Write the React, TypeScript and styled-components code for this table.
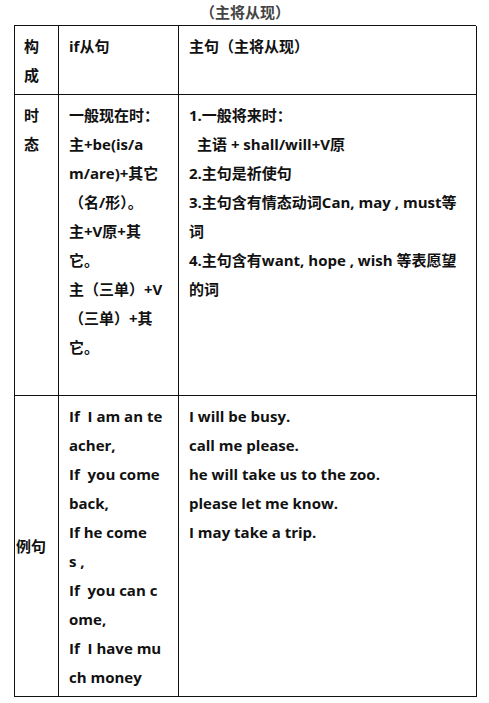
import styled, { createGlobalStyle } from 'styled-components'

const GlobalStyle = createGlobalStyle`
  html, body {
    margin: 0;
    padding: 0;
    background: #ffffff;
  }
  body {
    font-family: "Open Sans", "Noto Sans CJK SC", sans-serif;
    font-weight: 700;
    color: #111;
  }
`

const Page = styled.div`
  width: 489px;
  height: 703px;
  padding: 0 13px 0 14px;
  box-sizing: border-box;
`

const Title = styled.div`
  height: 25px;
  line-height: 25px;
  text-align: center;
  font-size: 15px;
  color: #444;
`

const Table = styled.div`
  display: grid;
  grid-template-columns: 44px 120px 298px;
  grid-template-rows: 69px 301px 301px;
  border-top: 1.5px solid #111;
  border-left: 1.5px solid #111;
`

const Cell = styled.div<{ $center?: boolean; $pad?: number }>`
  border-right: 1.5px solid #111;
  border-bottom: 1.5px solid #111;
  padding: ${(p) => (p.$center ? '0' : '6px')} 4px 0 ${(p) => p.$pad ?? 10}px;
  display: flex;
  flex-direction: column;
  justify-content: ${(p) => (p.$center ? 'center' : 'flex-start')};
  font-size: 15px;
  line-height: 29px;
  white-space: pre;
  overflow: hidden;
`

const Line = styled.div<{ $indent?: number }>`
  padding-left: ${(p) => p.$indent ?? 0}px;
`

const rows: { head: string[]; headCenter?: boolean; ifPart: string[]; main: { text: string; indent?: number }[] }[] = [
  {
    head: ['构', '成'],
    ifPart: ['if从句'],
    main: [{ text: '主句（主将从现）' }],
  },
  {
    head: ['时', '态'],
    ifPart: [
      '一般现在时：',
      '主+be(is/a',
      'm/are)+其它',
      '（名/形）。',
      '主+V原+其',
      '它。',
      '主（三单）+V',
      '（三单）+其',
      '它。',
    ],
    main: [
      { text: '1.一般将来时：' },
      { text: '主语 + shall/will+V原', indent: 8 },
      { text: '2.主句是祈使句' },
      { text: '3.主句含有情态动词Can, may , must等' },
      { text: '词' },
      { text: '4.主句含有want, hope , wish 等表愿望' },
      { text: '的词' },
    ],
  },
  {
    head: ['例句'],
    headCenter: true,
    ifPart: [
      'If  I am an te',
      'acher,',
      'If  you come',
      'back,',
      'If he come',
      's ,',
      'If  you can c',
      'ome,',
      'If  I have mu',
      'ch money',
    ],
    main: [
      { text: 'I will be busy.' },
      { text: 'call me please.' },
      { text: 'he will take us to the zoo.' },
      { text: 'please let me know.' },
      { text: 'I may take a trip.' },
    ],
  },
]

export default function App() {
  return (
    <Page>
      <GlobalStyle />
      <Title>（主将从现）</Title>
      <Table>
        {rows.map((row, i) => (
          <>
            <Cell key={`h${i}`} $center={row.headCenter} $pad={row.headCenter ? 1 : 9}>
              {row.head.map((t) => (
                <Line key={t}>{t}</Line>
              ))}
            </Cell>
            <Cell key={`i${i}`}>
              {row.ifPart.map((t, j) => (
                <Line key={j}>{t}</Line>
              ))}
            </Cell>
            <Cell key={`m${i}`}>
              {row.main.map((l, j) => (
                <Line key={j} $indent={l.indent}>
                  {l.text}
                </Line>
              ))}
            </Cell>
          </>
        ))}
      </Table>
    </Page>
  )
}
